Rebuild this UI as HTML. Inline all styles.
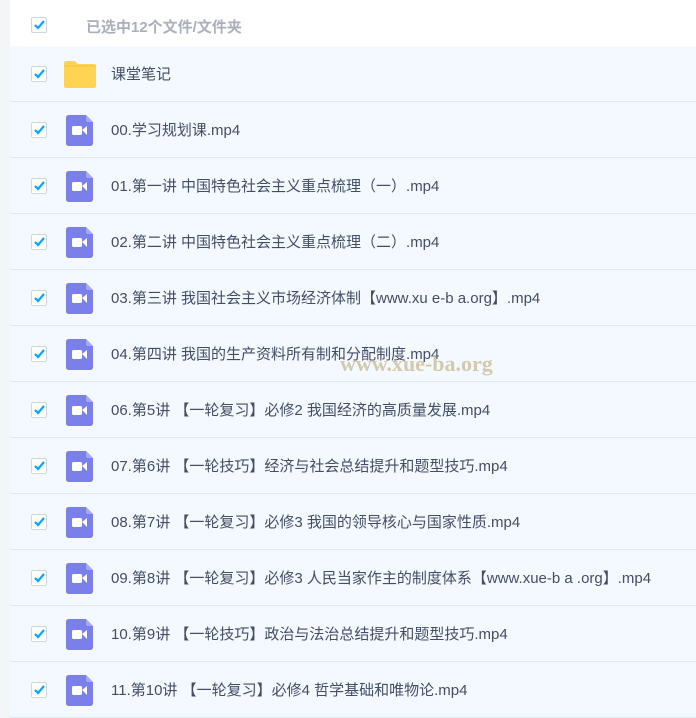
<!DOCTYPE html><html><head><meta charset="utf-8"><style>
body{margin:0;width:696px;height:690px;overflow:hidden;background:#f4f5f7;font-family:"Liberation Sans","Noto Sans CJK SC",sans-serif;}
.wrap{position:absolute;left:10px;top:0;width:686px;}
.hdr{height:46px;background:#fff;position:relative;}
.row{height:55px;border-bottom:1px solid #dfe9f5;background:#f3f9fe;position:relative;}
.cb{position:absolute;left:21px;width:14px;height:14px;border:1px solid #cfd6df;background:#fff;border-radius:2px;}
.cb svg{position:absolute;left:1px;top:1px}
.hdr .cb{top:17px}.row .cb{top:20px}
.t{position:absolute;left:101px;top:17px;font-size:15px;color:#424e67;white-space:nowrap}
.hdr .t{left:76px;top:16px;color:#a9b0bc;font-weight:bold}
.vid{position:absolute;left:56px;top:13px;width:27px;height:31px}
</style></head><body><div class="wrap">
<div class="hdr"><div class="cb"><svg width="12" height="12"><path d="M2 6l3 3 6-7" stroke="#06a7ff" stroke-width="2.2" fill="none"/></svg></div><div class="t">已选中12个文件/文件夹</div></div>
<div class="row"><div class="cb"><svg width="12" height="12"><path d="M2 6l3 3 6-7" stroke="#06a7ff" stroke-width="2.2" fill="none"/></svg></div>
<svg style="position:absolute;left:52px;top:14px" width="35" height="29"><path d="M2 3q0-2 2-2h9l3 3h16q2 0 2 2v20q0 2-2 2H4q-2 0-2-2z" fill="#ffd455"/><path d="M2 6h32" stroke="#f5c33f" stroke-width="1"/></svg>
<div class="t">课堂笔记</div></div>
<div id="list"></div>
</div>
<script>
var n=["00.学习规划课.mp4","01.第一讲 中国特色社会主义重点梳理（一）.mp4","02.第二讲 中国特色社会主义重点梳理（二）.mp4","03.第三讲 我国社会主义市场经济体制【www.xu e-b a.org】.mp4","04.第四讲 我国的生产资料所有制和分配制度.mp4","06.第5讲 【一轮复习】必修2 我国经济的高质量发展.mp4","07.第6讲 【一轮技巧】经济与社会总结提升和题型技巧.mp4","08.第7讲 【一轮复习】必修3 我国的领导核心与国家性质.mp4","09.第8讲 【一轮复习】必修3 人民当家作主的制度体系【www.xue-b a .org】.mp4","10.第9讲 【一轮技巧】政治与法治总结提升和题型技巧.mp4","11.第10讲 【一轮复习】必修4 哲学基础和唯物论.mp4"];
var h="";n.forEach(function(s){h+='<div class="row"><div class="cb"><svg width="12" height="12"><path d="M2 6l3 3 6-7" stroke="#06a7ff" stroke-width="2.2" fill="none"/></svg></div><svg class="vid" viewBox="0 0 27 31"><path d="M3 0h17l7 7v21q0 3-3 3H3q-3 0-3-3V3q0-3 3-3z" fill="#7b7fe8"/><path d="M20 0v5q0 2 2 2h5z" fill="#a6a9f2"/><rect x="6" y="11" width="10" height="9" rx="1.5" fill="#fff"/><path d="M16 15l5-4v9z" fill="#fff"/></svg><div class="t">'+s+'</div></div>';});
document.getElementById("list").innerHTML=h;
</script>
<div style="position:absolute;left:340px;top:351px;font-family:'Liberation Serif',serif;font-weight:bold;font-size:22px;color:rgba(190,170,120,0.6)">www.xue-ba.org</div>
</body></html>
